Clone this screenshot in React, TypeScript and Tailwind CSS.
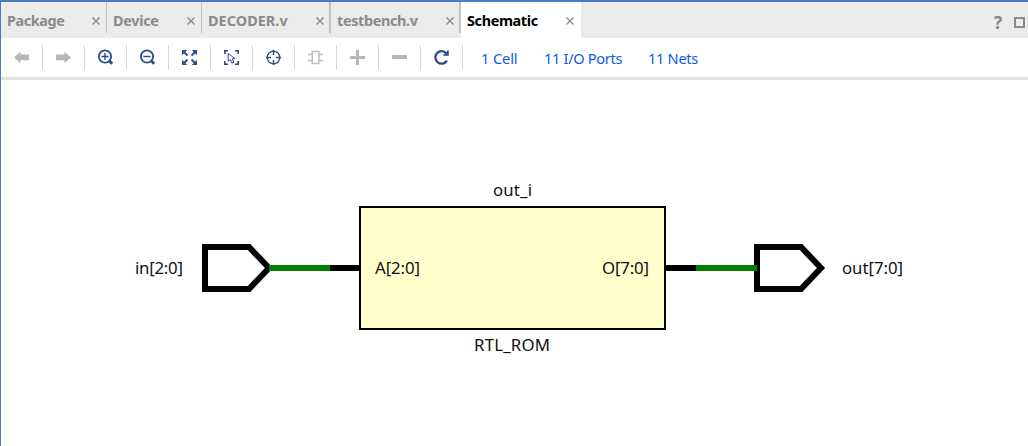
import type { ReactNode } from "react";

const FONT = "font-['Noto_Sans','Open_Sans',sans-serif]";

type Tab = { name: string; box: string; text: string; close: string; active?: boolean };

const tabs: Tab[] = [
  { name: "Package", box: "w-[106px]", text: "tracking-[-0.4px]", close: "mr-[6px]" },
  { name: "Device", box: "w-[95px]", text: "tracking-[-0.3px]", close: "mr-[6px]" },
  { name: "DECODER.v", box: "w-[129px]", text: "tracking-[0.05px]", close: "mr-[5px]" },
  { name: "testbench.v", box: "w-[130px]", text: "tracking-[-0.35px]", close: "mr-[5px]" },
  { name: "Schematic", box: "w-[120px]", text: "tracking-[-0.35px]", close: "mr-[7px]", active: true },
];

function Close({ margin }: { margin: string }) {
  return (
    <svg width="8" height="8" viewBox="0 0 8 8" className={`shrink-0 ${margin}`} stroke="#868686" strokeWidth="1.3">
      <path d="M0.5 0.5 7.5 7.5M7.5 0.5 0.5 7.5" />
    </svg>
  );
}

function TabItem({ tab, wide }: { tab: Tab; wide: boolean }) {
  return (
    <div className={`flex h-9 shrink-0 ${tab.box} ${tab.active ? "bg-white text-black" : "text-[#8a8a8a]"}`}>
      <div className="flex h-[37px] min-w-0 flex-1 items-center justify-between pl-[6px]">
        <span className={`whitespace-nowrap text-[14.4px] font-bold leading-5 ${tab.text}`}>{tab.name}</span>
        <Close margin={tab.close} />
      </div>
      {!tab.active && <div className={`h-[31px] shrink-0 bg-[#c0c0c0] ${wide ? "w-[2px]" : "w-px"}`} />}
    </div>
  );
}

function Icon({ children }: { children: ReactNode }) {
  return (
    <svg width="17" height="17" viewBox="0 0 17 17" fill="none">
      {children}
    </svg>
  );
}

const NAVY = "#2b4c86";
const GRAY = "#b7b7b7";

const tools: ReactNode[] = [
  <path d="M1 8.5 7.5 2.8V5.5H16V11.3H7.5V14.2Z" fill={GRAY} />,
  <path d="M16 8.5 9.5 2.8V5.5H1V11.3H9.5V14.2Z" fill={GRAY} />,
  <g stroke={NAVY}>
    <circle cx="8" cy="7.5" r="6.1" strokeWidth="1.8" />
    <path d="M4.5 7.5H11.5M8 4V11" strokeWidth="1.4" />
    <path d="M12 11.5 15.2 14.7" strokeWidth="2.8" />
  </g>,
  <g stroke={NAVY}>
    <circle cx="8" cy="7.5" r="6.1" strokeWidth="1.8" />
    <path d="M4.5 7.5H11.5" strokeWidth="1.4" />
    <path d="M12 11.5 15.2 14.7" strokeWidth="2.8" />
  </g>,
  <g>
    <path
      d="M1 1H6.2L1 6.2ZM16 1V6.2L10.8 1ZM1 16V10.8L6.2 16ZM16 16H10.8L16 10.8Z"
      fill={NAVY}
    />
    <path d="M3 3 6.5 6.5M14 3 10.5 6.5M3 14 6.5 10.5M14 14 10.5 10.5" stroke={NAVY} strokeWidth="1.9" />
  </g>,
  <g stroke={NAVY}>
    <path d="M1.8 5V1.8H5M12 1.8H15.2V5M15.2 12V15.2H12M5 15.2H1.8V12" strokeWidth="1.6" />
    <path d="M5.2 4.5V12.3L7.3 10.6 9 14.2 11 13.2 9.3 9.8 12 9.6Z" strokeWidth="1" />
  </g>,
  <g stroke={NAVY}>
    <circle cx="8.5" cy="8.5" r="6.3" strokeWidth="1.3" />
    <path d="M8.5 1V6M8.5 11V16M1 8.5H6M11 8.5H16" strokeWidth="1.5" />
  </g>,
  <g stroke="#c0c0c0">
    <rect x="5.3" y="2.5" width="6.7" height="12" strokeWidth="1.5" />
    <path d="M1 5.5H5.3M1 11.5H5.3M12 5.5H16M12 11.5H16" strokeWidth="1.6" />
  </g>,
  <path d="M1 8.5H16M8.5 1V16" stroke={GRAY} strokeWidth="3" />,
  <path d="M1 8H16" stroke={GRAY} strokeWidth="4" />,
  <g>
    <path d="M13.3 4.4A6.2 6.2 0 1 0 13.9 11.6" stroke={NAVY} strokeWidth="2.3" />
    <path d="M15.8 1.5V6.8H10.2V5.2H12.6L14.2 1.5Z" fill={NAVY} />
  </g>,
];

function Toolbar() {
  return (
    <div className="flex h-[42px] shrink-0 border-b-[3px] border-[#e4e4e4] bg-white pt-[7px]">
      {tools.map((icon, i) => (
        <div key={i} className="flex h-[25px] w-[42px] shrink-0 items-center justify-center border-r border-[#d6d6d6]">
          <Icon>{icon}</Icon>
        </div>
      ))}
      <div className="ml-[18px] flex h-[27px] items-center whitespace-nowrap text-[14.6px] text-[#0f57f0]">
        <span className="w-[63px] tracking-[-0.1px]">1 Cell</span>
        <span className="w-[104px] tracking-[-0.32px]">11 I/O Ports</span>
        <span className="tracking-[-0.3px]">11 Nets</span>
      </div>
    </div>
  );
}

function Schematic() {
  return (
    <svg width="1027" height="366" viewBox="1 80 1027 366" className="block">
      <g fill="none" stroke="#000" strokeWidth="6">
        <path d="M205 247H249L269 268 249 289H205Z" />
        <path d="M757 247H801L821 268 801 289H757Z" />
        <path d="M330 268H360M665 268H696" />
      </g>
      <g stroke="#008000" strokeWidth="6">
        <path d="M269 268H330M696 268H757" />
      </g>
      <rect x="360" y="207" width="305" height="122" fill="#ffffcc" stroke="#000" strokeWidth="2" />
      <g fill="#111" fontSize="16.8">
        <text x="135" y="274" textLength="48">in[2:0]</text>
        <text x="375" y="274" textLength="45">A[2:0]</text>
        <text x="493" y="196" textLength="39">out_i</text>
        <text x="602" y="274" textLength="47">O[7:0]</text>
        <text x="474" y="351" textLength="76">RTL_ROM</text>
        <text x="842" y="274" textLength="61">out[7:0]</text>
      </g>
    </svg>
  );
}

export default function App() {
  return (
    <div className={`flex h-[446px] w-[1028px] flex-col overflow-hidden border-l border-t-2 border-[#4a7bcb] bg-white ${FONT}`}>
      <div className="flex h-9 shrink-0 bg-[#ebebeb]">
        {tabs.map((t, i) => (
          <TabItem key={t.name} tab={t} wide={i > 1} />
        ))}
        <div className="ml-auto flex h-[41px] items-center gap-[11px] pr-[3px]">
          <span className="w-[9px] whitespace-nowrap text-[17px] font-bold leading-none text-[#858585]">?</span>
          <span className="h-[11px] w-[11px] border-2 border-[#8a8a8a]" />
        </div>
      </div>
      <Toolbar />
      <Schematic />
    </div>
  );
}
